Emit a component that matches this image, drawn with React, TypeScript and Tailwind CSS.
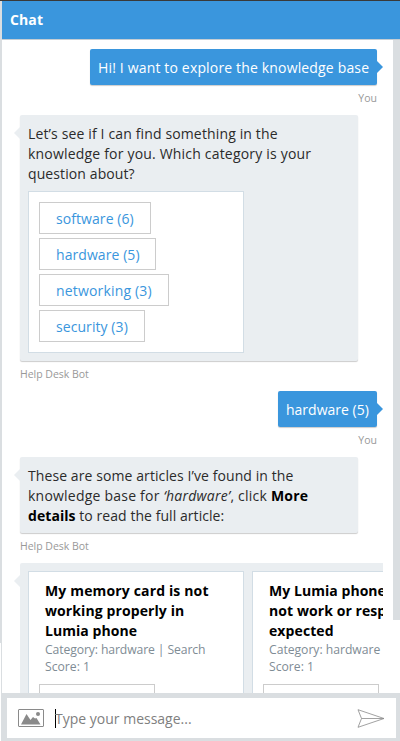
import React from 'react';

type LineProps = { className?: string; children: React.ReactNode };

const Line = ({ className = '', children }: LineProps) => (
  <div className={`h-5 w-max whitespace-nowrap text-[14px] leading-5 ${className}`}>{children}</div>
);

const UserMessage = ({ className, children }: LineProps) => (
  <div className={`relative ml-auto h-9 rounded-[2px] bg-[#3a96dd] pl-2 pt-[9px] text-white shadow-[0_1px_1px_rgba(0,0,0,0.2)] ${className}`}>
    {children}
    <svg className="absolute -right-[6px] top-3 h-3 w-[6px]" viewBox="0 0 6 12">
      <path d="M0 0L6 6L0 12Z" fill="#3a96dd" />
    </svg>
  </div>
);

const BotTail = () => (
  <svg className="absolute -left-[6px] top-3 h-3 w-[6px]" viewBox="0 0 6 12">
    <path d="M6 0L0 6L6 12Z" fill="#eaeef1" />
  </svg>
);

const BotMessage = ({ className, children }: LineProps) => (
  <div className={`relative ml-[18px] w-[338px] rounded-[2px] bg-[#eaeef1] pl-2 pt-[9px] shadow-[0_1px_1px_rgba(0,0,0,0.2)] ${className}`}>
    <BotTail />
    {children}
  </div>
);

const You = () => (
  <div className="mr-4 flex h-[30px] justify-end pt-[5px] text-[10.5px] leading-4 text-[#999]">You</div>
);

const BotName = () => (
  <div className="ml-[18px] h-[30px] whitespace-nowrap pt-[5px] text-[10.5px] leading-4 tracking-[-0.03px] text-[#999]">Help Desk Bot</div>
);

const Choice = ({ className, children }: LineProps) => (
  <button className={`block h-8 whitespace-nowrap border border-[#ccc] bg-white pl-4 pt-px text-left text-[14px] leading-[30px] tracking-[0.07px] text-[#3a96dd] ${className}`}>
    {children}
  </button>
);

const Article = ({ children }: LineProps) => (
  <div className="h-[200px] w-[216px] shrink-0 border border-[#d2dde5] bg-white pl-4 pt-[9px]">
    <div className="font-bold text-black">{children}</div>
    <div className="-ml-1.5 mt-[9px] h-8 w-[116px] border border-[#ccc]" />
  </div>
);

const Meta = ({ className = '', children }: LineProps) => (
  <div className={`h-[17px] w-max whitespace-nowrap text-[12.2px] font-normal leading-[17px] text-[#808c95] ${className}`}>{children}</div>
);

export default function App() {
  return (
    <div className="flex h-[741px] w-[400px] flex-col overflow-hidden bg-white font-['Open_Sans','Noto_Sans',sans-serif] text-[#2b2b2b]">
      <div className="h-px shrink-0 bg-[#393939]" />
      <div className="flex h-[692px] shrink-0">
        <div className="w-[2px] shrink-0">
          <div className="h-[642px] bg-[#dadee1]" />
          <div className="ml-px h-[50px] bg-[#dadee1]" />
        </div>
        <div className="flex w-[398px] flex-col">
          <header className="h-[39px] shrink-0 border-b border-[#c5cdd3] bg-[#3a96dd] pl-2 pt-[9px] text-[14px] font-bold leading-5 tracking-[0.1px] text-white">Chat</header>
          <div className="flex h-[653px]">
            <main className="w-[391px] shrink-0 overflow-hidden pt-[9px]">
              <UserMessage className="mr-4 w-[287px]"><Line className="tracking-[0.16px]">Hi! I want to explore the knowledge base</Line></UserMessage>
              <You />
              <BotMessage className="h-[246px]">
                <Line className="tracking-[0.14px]">Let’s see if I can find something in the</Line>
                <Line className="tracking-[0.19px]">knowledge for you. Which category is your</Line>
                <Line className="tracking-[0.1px]">question about?</Line>
                <div className="mt-[7px] flex h-[162px] w-[216px] flex-col gap-1 border border-[#d2dde5] bg-white pl-2.5 pt-2.5">
                  <Choice className="w-[112px]">software (6)</Choice>
                  <Choice className="w-[117px]">hardware (5)</Choice>
                  <Choice className="w-[130px] tracking-[0.17px]">networking (3)</Choice>
                  <Choice className="w-[106px]">security (3)</Choice>
                </div>
              </BotMessage>
              <BotName />
              <UserMessage className="mr-4 w-[99px]"><Line>hardware (5)</Line></UserMessage>
              <You />
              <BotMessage className="h-[76px]">
                <Line className="tracking-[0.09px]">These are some articles I’ve found in the</Line>
                <Line className="tracking-[0.22px]">knowledge base for <i>‘hardware’</i>, click <b className="text-black">More</b></Line>
                <Line className="tracking-[0.06px]"><b className="text-black">details</b> to read the full article:</Line>
              </BotMessage>
              <BotName />
              <div className="relative ml-[18px] h-[200px] w-[363px] rounded-tl-[2px] bg-[#eaeef1] pt-2">
                <BotTail />
                <div className="flex gap-2 overflow-hidden pl-2">
                  <Article>
                    <Line className="tracking-[0.15px]">My memory card is not</Line>
                    <Line className="tracking-[0.1px]">working properly in</Line>
                    <Line className="tracking-[0.05px]">Lumia phone</Line>
                    <Meta className="tracking-[-0.11px]">Category: hardware | Search</Meta>
                    <Meta>Score: 1</Meta>
                  </Article>
                  <Article>
                    <Line className="tracking-[0.05px]">My Lumia phone does</Line>
                    <Line className="tracking-[0.08px]">not work or respond as</Line>
                    <Line className="tracking-[0.1px]">expected</Line>
                    <Meta className="tracking-[-0.03px]">Category: hardware | Search</Meta>
                    <Meta>Score: 1</Meta>
                  </Article>
                </div>
              </div>
            </main>
            <div className="h-[580px] w-[7px] bg-[#dadee1]" />
          </div>
        </div>
      </div>
      <footer className="ml-px h-12 shrink-0 bg-[#dadee1] pl-1.5 pt-[5px]">
        <div className="flex h-10 w-[389px] items-center bg-white pl-[11px]">
          <svg className="h-[18px] w-[26px]" viewBox="0 0 26 18">
            <rect x="0.5" y="0.5" width="25" height="17" rx="0.5" fill="none" stroke="#8a8a8a" />
            <path d="M3 15.5L8.5 5L12.5 11L15 8L17 9.5L18.5 9L22.5 15.5Z" fill="#8a8a8a" />
            <circle cx="20" cy="5" r="2" fill="#8a8a8a" />
          </svg>
          <div className="ml-[11px] h-[19px] w-px bg-black" />
          <div className="-ml-px w-[302px] whitespace-nowrap pt-px text-[14px] leading-5 text-[#808080]">Type your message...</div>
          <svg className="h-[19px] w-7" viewBox="0 0 28 19" fill="none" stroke="#8a8a8a" strokeWidth="0.8">
            <path d="M1 0.7L27 9.5L1 18.3L4.5 9.5ZM4.5 9.5H27" />
          </svg>
        </div>
      </footer>
    </div>
  );
}
